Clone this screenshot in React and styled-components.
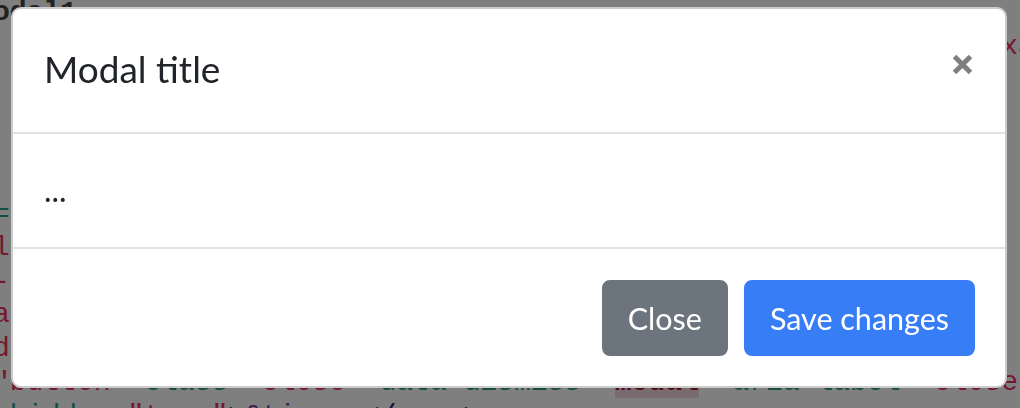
import styled, { createGlobalStyle } from "styled-components";

const GlobalStyle = createGlobalStyle`
  html, body {
    margin: 0;
    padding: 0;
    overflow: hidden;
    background: #fff;
  }
`;

const Page = styled.div`
  width: 1020px;
  height: 408px;
  overflow: hidden;
  background: #fff;
`;

const Code = styled.pre`
  margin: -4px 0 0 -7px;
  font-family: "Liberation Mono", monospace;
  font-size: 28px;
  line-height: 33.6px;
  color: #333;
  white-space: pre;
`;

const Tok = styled.span`
  color: ${(p) => p.$c};
  font-weight: ${(p) => (p.$bold ? 700 : 400)};
  background: ${(p) => p.$bg || "transparent"};
`;

const Backdrop = styled.div`
  position: fixed;
  inset: 0;
  background: rgba(0, 0, 0, 0.5);
`;

const Dialog = styled.div`
  position: fixed;
  top: 7px;
  left: 11px;
  width: 996px;
  display: flex;
  flex-direction: column;
  box-sizing: border-box;
  background: #fff;
  border: 2px solid rgba(0, 0, 0, 0.2);
  border-radius: 10px;
  font-family: Lato, "Noto Sans", sans-serif;
  color: #212529;
`;

const Header = styled.div`
  display: flex;
  align-items: flex-start;
  justify-content: space-between;
  padding: 30px 32px 33px 31px;
  border-bottom: 2px solid #dee2e6;
`;

const Title = styled.h5`
  margin: 0;
  font-size: 37px;
  font-weight: 400;
  line-height: 60px;
`;

const CloseX = styled.button`
  margin-top: 15px;
  padding: 0;
  border: 0;
  background: transparent;
  display: flex;
  color: #7f7f7f;
`;

const Body = styled.div`
  padding: 32px 31px 33px;
  font-size: 32px;
  line-height: 48px;
  border-bottom: 2px solid #dee2e6;
`;

const Footer = styled.div`
  display: flex;
  justify-content: flex-end;
  gap: 16px;
  padding: 31px 30px 30px;
`;

const Button = styled.button`
  height: 76px;
  padding: 0 24px;
  border: 2px solid ${(p) => (p.$primary ? "#377df6" : "#6c757d")};
  border-radius: 8px;
  background: ${(p) => (p.$primary ? "#377df6" : "#6c757d")};
  color: #fff;
  font-family: Lato, "Noto Sans", sans-serif;
  font-size: 30.5px;
  line-height: 48px;
`;

const RED = "#e8325a";
const TEAL = "#2a9a86";
const DARK = "#333";
const PURPLE = "#7a3fa0";

const lines = [
  [["odal1", "#444", true]],
  [[" "], ["aria-labelledby", TEAL], ["=", DARK], ['"exampleModalLabel"', RED], [" "], ["tabindex", TEAL], ["=", DARK], ['"-1"', RED], [" "], ["target", TEAL], ["=", DARK], ['"exampleModal"', RED]],
  [[""]],
  [[""]],
  [[""]],
  [[""]],
  [["=", TEAL], ['"modal-dialog" role="document" aria-label="dialog"            label"', RED]],
  [['labelledby"', RED]],
  [['-role"', RED]],
  [['a"', RED]],
  [['data"', RED]],
  [['"button"', RED], [" "], ["class", TEAL], ["=", DARK], ['"close"', RED], [" "], ["data-dismiss", TEAL], ["=", DARK], ['"'], ["modal", "#a0142e", true, "#f3d6dc"], ['"', RED], [" "], ["aria-label", TEAL], ["=", DARK], ['"close"', RED], [">", DARK]],
  [["-hidden", TEAL], ["=", DARK], ['"true"', RED], [">", DARK], ["&times;", PURPLE], ["</span>", "#1b2a6b"]],
];

const CloseIcon = () => (
  <svg width="21" height="21" viewBox="0 0 21 21">
    <path d="M2.5 2.5 L18.5 18.5 M18.5 2.5 L2.5 18.5" stroke="currentColor" strokeWidth="5" fill="none" />
  </svg>
);

export default function App() {
  return (
    <Page>
      <GlobalStyle />
      <Code>
        {lines.map((line, i) => (
          <div key={i}>
            {line.map(([t, c, b, bg], j) => (
              <Tok key={j} $c={c || RED} $bold={b} $bg={bg}>
                {t}
              </Tok>
            ))}
            {"\u200b"}
          </div>
        ))}
      </Code>
      <Backdrop />
      <Dialog role="dialog">
        <Header>
          <Title>Modal title</Title>
          <CloseX aria-label="Close">
            <CloseIcon />
          </CloseX>
        </Header>
        <Body>...</Body>
        <Footer>
          <Button>Close</Button>
          <Button $primary>Save changes</Button>
        </Footer>
      </Dialog>
    </Page>
  );
}
